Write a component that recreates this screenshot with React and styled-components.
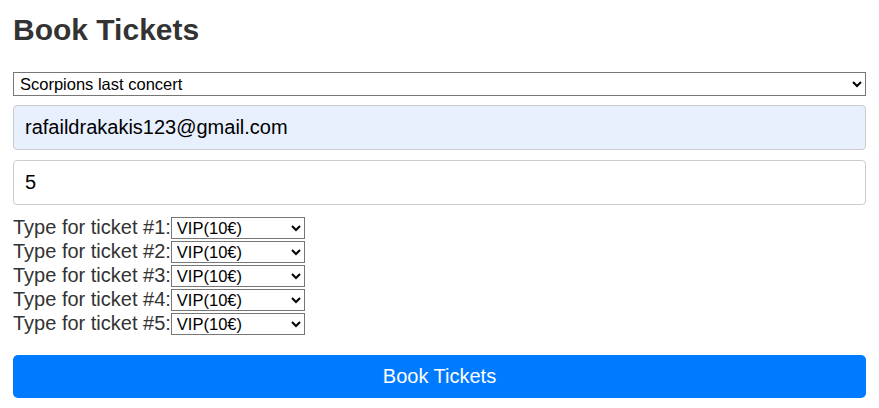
import React from "react";
import styled, { createGlobalStyle } from "styled-components";

const Global = createGlobalStyle`
  html, body { margin: 0; padding: 0; background: #fff; }
  body { font-family: "Liberation Sans", Arial, sans-serif; color: #333; }
`;

const Page = styled.form`
  padding: 0 13px;
  display: flex;
  flex-direction: column;
`;

const Title = styled.h1`
  font-size: 30px;
  font-weight: bold;
  color: #333;
  margin: 13px 0 0;
  line-height: 34px;
`;

const EventSelect = styled.select`
  margin-top: 25px;
  height: 24px;
  width: 100%;
  font-family: "Liberation Sans", Arial, sans-serif;
  font-size: 16.5px;
  color: #000;
  border: 1px solid #767676;
  border-radius: 0;
  background: #fff;
  padding: 0 2px;
`;

const TextInput = styled.input`
  box-sizing: border-box;
  height: 45px;
  width: 100%;
  margin-top: ${(p) => p.$top}px;
  padding: 0 11px;
  font-family: "Liberation Sans", Arial, sans-serif;
  font-size: 20px;
  color: #000;
  border: 1px solid #ccc;
  border-radius: 4px;
  background: ${(p) => (p.$filled ? "#e8f0fe" : "#fff")};
  outline: none;
`;

const Tickets = styled.div`
  margin-top: 10px;
  display: flex;
  flex-direction: column;
`;

const TicketRow = styled.div`
  display: flex;
  align-items: flex-start;
  height: 24px;
`;

const TicketLabel = styled.label`
  font-size: 20px;
  color: #333;
  line-height: 24px;
`;

const TypeSelect = styled.select`
  margin-top: 2px;
  width: 134px;
  height: 22px;
  font-family: "Liberation Sans", Arial, sans-serif;
  font-size: 16.5px;
  color: #000;
  border: 1px solid #767676;
  border-radius: 0;
  background: #fff;
  padding: 0 1px;
`;

const Submit = styled.button`
  margin-top: 20px;
  height: 43px;
  width: 100%;
  border: none;
  border-radius: 5px;
  background: #007bff;
  color: #fff;
  font-family: "Liberation Sans", Arial, sans-serif;
  font-size: 20px;
`;

export default function App() {
  const rows = [1, 2, 3, 4, 5];
  return (
    <>
      <Global />
      <Page onSubmit={(e) => e.preventDefault()}>
        <Title>Book Tickets</Title>
        <EventSelect defaultValue="scorpions">
          <option value="scorpions">Scorpions last concert</option>
        </EventSelect>
        <TextInput $top={9} $filled type="email" defaultValue="rafaildrakakis123@gmail.com" />
        <TextInput $top={10} type="text" inputMode="numeric" defaultValue="5" />
        <Tickets>
          {rows.map((n) => (
            <TicketRow key={n}>
              <TicketLabel>Type for ticket #{n}:</TicketLabel>
              <TypeSelect defaultValue="vip">
                <option value="vip">VIP(10€)</option>
                <option value="regular">Regular(5€)</option>
              </TypeSelect>
            </TicketRow>
          ))}
        </Tickets>
        <Submit type="submit">Book Tickets</Submit>
      </Page>
    </>
  );
}
